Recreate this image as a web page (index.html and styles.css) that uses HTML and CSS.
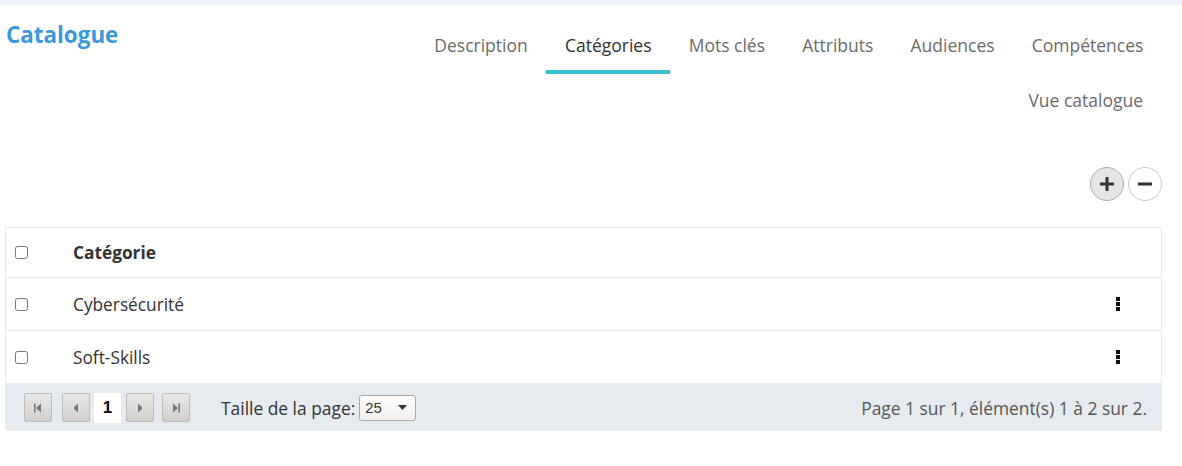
FILE: index.html
```html
<!DOCTYPE html>
<html lang="fr">
<head>
  <meta charset="UTF-8">
  <meta name="viewport" content="width=device-width, initial-scale=1.0">
  <title>Catalogue</title>
  <link rel="stylesheet" href="styles.css">
</head>
<body>
  <div class="top-band"></div>
  <div class="page">
    <div class="head">
      <h1 class="title">Catalogue</h1>
      <ul class="tabs">
        <li>Description</li>
        <li class="active">Catégories</li>
        <li>Mots clés</li>
        <li>Attributs</li>
        <li>Audiences</li>
        <li>Compétences</li>
        <li>Vue catalogue</li>
      </ul>
    </div>

    <div class="tools">
      <button class="round-btn plus" title="Ajouter">
        <svg width="14" height="14" viewBox="0 0 14 14"><path d="M5.5 0h3v5.5H14v3H8.5V14h-3V8.5H0v-3h5.5z" fill="#333"/></svg>
      </button>
      <button class="round-btn" title="Supprimer">
        <svg width="14" height="14" viewBox="0 0 14 14"><rect x="0" y="5.5" width="14" height="3" fill="#333"/></svg>
      </button>
    </div>

    <div class="grid">
      <div class="row head-row">
        <div class="cell check"><input type="checkbox"></div>
        <div class="cell name">Catégorie</div>
        <div class="cell menu"></div>
      </div>
      <div class="row">
        <div class="cell check"><input type="checkbox"></div>
        <div class="cell name">Cybersécurité</div>
        <div class="cell menu"><span class="kebab"><i></i><i></i><i></i></span></div>
      </div>
      <div class="row">
        <div class="cell check"><input type="checkbox"></div>
        <div class="cell name">Soft-Skills</div>
        <div class="cell menu"><span class="kebab"><i></i><i></i><i></i></span></div>
      </div>
      <div class="pager">
        <div class="pager-left">
          <span class="pg-btn first"><svg width="12" height="12" viewBox="0 0 12 12"><rect x="2" y="1.5" width="1.6" height="9" fill="#777"/><path d="M9 1.5v9L4 6z" fill="#777"/></svg></span>
          <span class="pg-btn prev"><svg width="12" height="12" viewBox="0 0 12 12"><path d="M8 1.5v9L3.5 6z" fill="#777"/></svg></span>
          <span class="pg-current">1</span>
          <span class="pg-btn next"><svg width="12" height="12" viewBox="0 0 12 12"><path d="M4 1.5v9L8.5 6z" fill="#777"/></svg></span>
          <span class="pg-btn last"><svg width="12" height="12" viewBox="0 0 12 12"><path d="M3 1.5v9L8 6z" fill="#777"/><rect x="8.4" y="1.5" width="1.6" height="9" fill="#777"/></svg></span>
          <span class="pg-size">Taille de la page:</span>
          <span class="pg-select">25 <svg width="9" height="5" viewBox="0 0 9 5"><path d="M0 0h9L4.5 5z" fill="#333"/></svg></span>
        </div>
        <div class="pager-info">Page 1 sur 1, élément(s) 1 à 2 sur 2.</div>
      </div>
    </div>
  </div>
</body>
</html>
```

FILE: styles.css
```css
body{
  margin: 0;
  font-family: "Open Sans", "Liberation Sans", sans-serif;
  color: #333;
  background: #fff;
}
.top-band{
  height: 5px;
  background: #eef1f5;
}
.page{
  padding: 0 20px 0 5px;
}
.head{
  display: flex;
  justify-content: space-between;
  align-items: flex-start;
}
.title{
  margin: 15px 0 0 1px;
  font-size: 22.4px;
  line-height: 30px;
  font-weight: 700;
  color: #3a99dc;
}
.tabs{
  display: flex;
  flex-wrap: wrap;
  justify-content: flex-end;
  list-style: none;
  margin: 14px 0 0;
  padding: 0;
  width: 770px;
}
.tabs li{
  padding: 14px 18.6px 13px;
  font-size: 17.5px;
  line-height: 24px;
  color: #6b6b6b;
  border-bottom: 4px solid transparent;
}
.tabs li:last-child{
  padding-right: 19px;
}
.tabs li.active{
  color: #333;
  border-bottom-color: #33c3d3;
}
.tools{
  display: flex;
  justify-content: flex-end;
  gap: 4px;
  margin-top: 38px;
}
.round-btn{
  width: 34px;
  height: 34px;
  border-radius: 50%;
  border: 1px solid #ccc;
  background: #fff;
  display: flex;
  align-items: center;
  justify-content: center;
  padding: 0;
}
.round-btn.plus{
  background: #e6e6e6;
  border-color: #adadad;
}
.grid{
  margin-top: 26px;
  border: 1px solid #e8ebee;
  border-bottom: none;
}
.row{
  display: flex;
  align-items: center;
  height: 52px;
  border-bottom: 1px solid #e8ebee;
  font-size: 17.3px;
}
.head-row{
  height: 49px;
  font-weight: 700;
}
.cell.check{
  width: 67px;
  padding-left: 9px;
  box-sizing: border-box;
}
.cell.check input{
  margin: 0;
  width: 13px;
  height: 13px;
}
.cell.name{
  flex: 1;
}
.cell.menu{
  width: 45px;
}
.kebab{
  display: flex;
  flex-direction: column;
  gap: 1px;
  width: 4px;
}
.kebab i{
  display: block;
  width: 4px;
  height: 4px;
  background: #111;
}
.pager{
  display: flex;
  justify-content: space-between;
  align-items: center;
  background: #e6ebef;
  height: 47px;
  padding: 0 14px 0 18px;
}
.pager-left{
  display: flex;
  align-items: center;
}
.pg-btn{
  width: 28px;
  height: 29px;
  box-sizing: border-box;
  border: 1px solid #bdbdbd;
  border-radius: 2px;
  background: linear-gradient(#e9e9e9, #cfcfcf);
  display: flex;
  align-items: center;
  justify-content: center;
  margin-right: 10px;
}
.pg-btn.prev{
  margin-right: 4px;
}
.pg-btn.next{
  margin-right: 8px;
}
.pg-current{
  width: 27px;
  height: 30px;
  background: #fff;
  font-family: "Liberation Sans", Arial, sans-serif;
  font-weight: 700;
  font-size: 17px;
  color: #000;
  display: flex;
  align-items: center;
  justify-content: center;
  margin-right: 5px;
}
.pg-size{
  margin-left: 21px;
  font-size: 17.4px;
  color: #333;
}
.pg-select{
  margin-left: 4px;
  width: 57px;
  height: 26px;
  border: 1px solid #aaa;
  border-radius: 3px;
  background: linear-gradient(#fff, #f0f0f0);
  font-family: "Liberation Sans", Arial, sans-serif;
  font-size: 15px;
  display: flex;
  align-items: center;
  justify-content: space-between;
  padding: 0 8px 0 5px;
  box-sizing: border-box;
}
.pager-info{
  font-size: 17.4px;
  color: #555;
}
```
